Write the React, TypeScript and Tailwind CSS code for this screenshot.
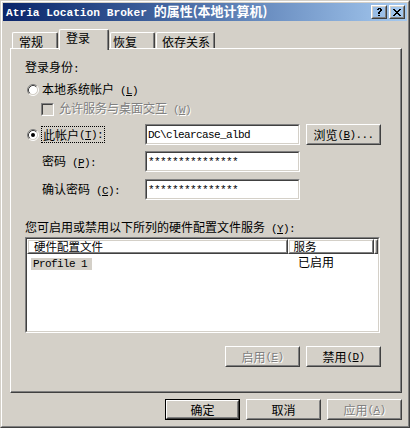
import React from 'react';

const cjk = "font-['Noto_Sans_CJK_SC',sans-serif]";
const mono = "font-['Liberation_Mono','Noto_Sans_CJK_SC',monospace] text-[11px] tracking-[-0.6px]";
const disabled = 'text-[#808080] [text-shadow:1px_1px_0_#ffffff]';

type Box = { className?: string; innerClassName?: string; children?: React.ReactNode };

// win2000 3d borders
const Raised = ({ className = '', innerClassName = '', children }: Box) => (
  <div className={`border border-t-white border-l-white border-r-[#404040] border-b-[#404040] ${className}`}>
    <div className={`h-full border border-t-[#d4d0c8] border-l-[#d4d0c8] border-r-[#808080] border-b-[#808080] ${innerClassName}`}>
      {children}
    </div>
  </div>
);

const Sunken = ({ className = '', innerClassName = '', children }: Box) => (
  <div className={`border border-t-[#808080] border-l-[#808080] border-r-white border-b-white ${className}`}>
    <div className={`h-full border border-t-[#404040] border-l-[#404040] border-r-[#d4d0c8] border-b-[#d4d0c8] ${innerClassName}`}>
      {children}
    </div>
  </div>
);

const Key = ({ k, colon, dots }: { k: string; colon?: boolean; dots?: boolean }) => (
  <span className={mono}> (<u className="underline-offset-1">{k}</u>){colon ? ':' : ''}{dots ? '...' : ''}</span>
);

const Radio = ({ checked }: { checked?: boolean }) => (
  <svg width="12" height="12" viewBox="0 0 12 12" className="shrink-0">
    <circle cx="6" cy="6" r="4.5" fill="#ffffff" />
    <path d="M2.11 9.89A5.5 5.5 0 0 1 9.89 2.11" stroke="#808080" fill="none" />
    <path d="M9.89 2.11A5.5 5.5 0 0 1 2.11 9.89" stroke="#ffffff" fill="none" />
    <path d="M2.82 9.18A4.5 4.5 0 0 1 9.18 2.82" stroke="#404040" fill="none" />
    <path d="M9.18 2.82A4.5 4.5 0 0 1 2.82 9.18" stroke="#d4d0c8" fill="none" />
    {checked && <circle cx="6" cy="6" r="2" fill="#000000" />}
  </svg>
);

const Glyph = ({ rows }: { rows: string[] }) => (
  <svg width={rows[0].length} height={rows.length} shapeRendering="crispEdges">
    {rows.map((r, y) =>
      r.split('').map((c, x) => (c === '#' ? <rect key={`${x}-${y}`} x={x} y={y} width="1" height="1" fill="#000" /> : null))
    )}
  </svg>
);

const closeGlyph = ['##....##', '.##..##.', '..####..', '...##...', '..####..', '.##..##.', '##....##'];
const helpGlyph = ['..###..', '.##.##.', '....##.', '...##..', '..##...', '..##...', '.......', '..##...'];

const Button = ({ children, dim, def, className = '' }: { children: React.ReactNode; dim?: boolean; def?: boolean; className?: string }) => {
  const body = (
    <Raised
      className={def ? 'w-full h-full' : `w-[75px] h-[21px] ${className}`}
      innerClassName={`flex items-center justify-center whitespace-nowrap ${dim ? disabled : ''}`}
    >
      {children}
    </Raised>
  );
  if (def) return <div className={`w-[75px] h-[21px] border border-black ${className}`}>{body}</div>;
  return body;
};

const Field = ({ text }: { text: string }) => (
  <Sunken className="w-[155px] h-[21px] shrink-0" innerClassName="bg-white flex items-center pl-px">
    <span className={mono}>{text}</span>
  </Sunken>
);

export default function App() {
  return (
    <div className={`w-[410px] h-[428px] bg-[#d4d0c8] text-black text-[12px] leading-[14px] ${cjk} border border-t-[#d4d0c8] border-l-[#d4d0c8] border-r-[#404040] border-b-[#404040]`}>
      <div className="h-full border border-t-white border-l-white border-r-[#808080] border-b-[#808080] p-px flex flex-col">
        {/* title bar */}
        <div className="h-[18px] shrink-0 flex items-center bg-linear-to-r from-[#0a246a] to-[#a6caf0] pl-[3px] pr-[2px]">
          <div className="flex-1 text-white font-bold whitespace-nowrap leading-[18px]">
            <span className="font-['Liberation_Mono',monospace] text-[11.2px]">Atria Location Broker&nbsp;</span>
            <span className={`${cjk} text-[13px]`}>的属性(本地计算机)</span>
          </div>
          <Raised className="w-[16px] h-[14px]" innerClassName="flex items-center justify-center">
            <Glyph rows={helpGlyph} />
          </Raised>
          <Raised className="w-[16px] h-[14px] ml-[2px]" innerClassName="flex items-center justify-center">
            <Glyph rows={closeGlyph} />
          </Raised>
        </div>

        {/* tabs + page */}
        <div className="ml-[7px] w-[392px] mt-[8px]">
          <div className="flex items-end h-[19px]">
            <div className="ml-[2px] w-[46px] h-[16px] border-l border-t border-r border-l-white border-t-white border-r-[#404040] rounded-t-[2px]">
              <div className="h-full border-r border-r-[#808080] pl-[6px] pt-[2px]">常规</div>
            </div>
            <div className="relative z-10 ml-px w-[50px] h-[21px] -mb-[2px] bg-[#d4d0c8] border-l border-t border-r border-l-white border-t-white border-r-[#404040] rounded-t-[2px]">
              <div className="h-full border-r border-r-[#808080] pl-[6px] pt-[1px]">登录</div>
            </div>
            <div className="ml-px w-[45px] h-[16px] border-l border-t border-r border-l-white border-t-white border-r-[#404040] rounded-t-[2px]">
              <div className="h-full border-r border-r-[#808080] pl-[2px] pt-[2px]">恢复</div>
            </div>
            <div className="ml-px w-[59px] h-[16px] border-l border-t border-r border-l-white border-t-white border-r-[#404040] rounded-t-[2px]">
              <div className="h-full border-r border-r-[#808080] pl-[5px] pt-[2px]">依存关系</div>
            </div>
          </div>

          <div className="h-[345px] border border-l-white border-t-white border-r-[#404040] border-b-[#404040]">
            <div className="h-full border-r border-b border-r-[#808080] border-b-[#808080] pt-[11px] pl-[14px] flex flex-col">
              <div className="h-[14px]">
                登录身份<span className={mono}>:</span>
              </div>

              <div className="mt-[9px] h-[14px] flex items-center pl-[2px]">
                <Radio />
                <span className="ml-[3px]">
                  本地系统帐户<Key k="L" />
                </span>
              </div>

              <div className="mt-[5px] h-[14px] flex items-center pl-[16px]">
                <Sunken className="w-[13px] h-[13px]" innerClassName="bg-[#d4d0c8]" />
                <span className={`ml-[5px] ${disabled}`}>
                  允许服务与桌面交互<Key k="W" />
                </span>
              </div>

              <div className="mt-[8px] h-[21px] flex items-center pl-[2px]">
                <div className="w-[118px] flex items-center">
                  <Radio checked />
                  <div className="ml-[2px] h-[17px] px-px flex items-center border border-dotted border-black">
                    此帐户<Key k="T" colon />
                  </div>
                </div>
                <Field text={'DC\\clearcase_albd'} />
                <Button className="ml-[6px]">
                  浏览<Key k="B" dots />
                </Button>
              </div>

              <div className="mt-[6px] h-[21px] flex items-center pl-[2px]">
                <div className="w-[118px] pl-[15px]">
                  密码<Key k="P" colon />
                </div>
                <Field text="***************" />
              </div>

              <div className="mt-[7px] h-[21px] flex items-center pl-[2px]">
                <div className="w-[118px] pl-[15px]">
                  确认密码<Key k="C" colon />
                </div>
                <Field text="***************" />
              </div>

              <div className="mt-[20px] h-[14px]">
                您可启用或禁用以下所列的硬件配置文件服务<Key k="Y" colon />
              </div>

              <Sunken className="mt-[3px] w-[355px] h-[96px]" innerClassName="bg-white flex flex-col">
                <div className="flex h-[15px] shrink-0 text-[11.5px] leading-[11px]">
                  <Raised className="w-[263px] h-full" innerClassName="pl-[5px] flex items-center">
                    硬件配置文件
                  </Raised>
                  <Raised className="w-[86px] h-full" innerClassName="pl-[3px] flex items-center">
                    服务
                  </Raised>
                  <Raised className="flex-1 h-full" />
                </div>
                <div className="flex h-[12px] mt-[2px] leading-[12px]">
                  <div className="w-[263px] pl-[4px]">
                    <span className={`${mono} inline-block bg-[#d4d0c8] w-[61px] h-[12px] pl-[2px] leading-[12px]`}>Profile 1</span>
                  </div>
                  <div className="pl-[8px]">已启用</div>
                </div>
              </Sunken>

              <div className="mt-[13px] flex justify-end gap-[6px] pr-[19px]">
                <Button dim>
                  启用<Key k="E" />
                </Button>
                <Button>
                  禁用<Key k="D" />
                </Button>
              </div>
            </div>
          </div>
        </div>

        {/* dialog buttons */}
        <div className="mt-[6px] flex justify-end gap-[6px] pr-[5px]">
          <Button def>确定</Button>
          <Button>取消</Button>
          <Button dim>
            应用<Key k="A" />
          </Button>
        </div>
      </div>
    </div>
  );
}
